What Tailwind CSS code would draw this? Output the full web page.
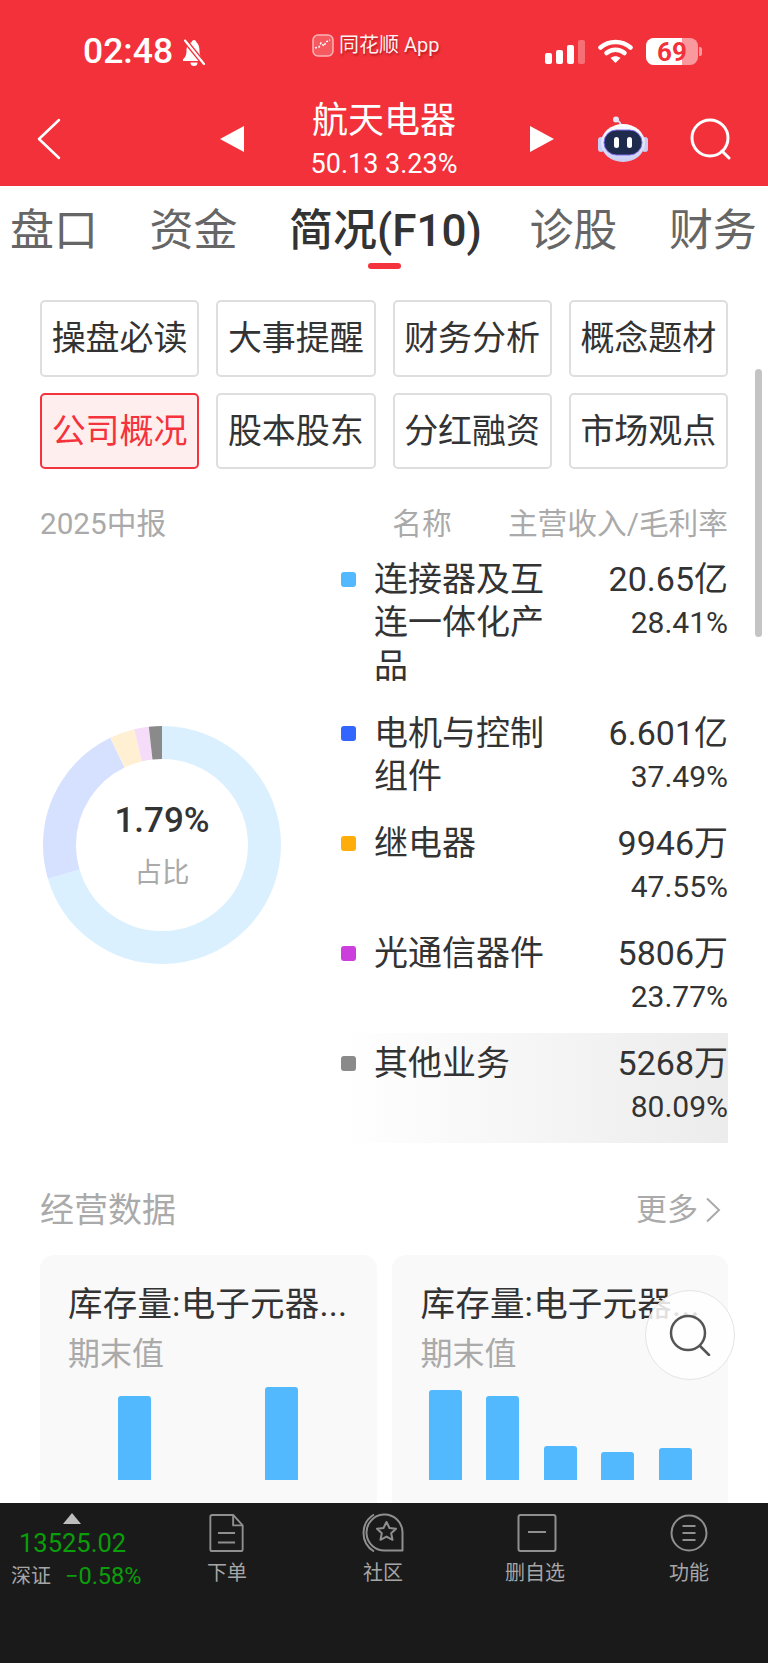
<!DOCTYPE html>
<html lang="zh-CN">
<head>
<meta charset="utf-8">
<script src="https://cdn.jsdelivr.net/npm/@tailwindcss/browser@4"></script>
</head>
<body class="m-0 bg-white font-['Roboto','Noto_Sans_CJK_SC',sans-serif]">
<div class="relative flex h-[1663px] w-[768px] flex-col overflow-hidden bg-white text-[#333]">

  <!-- red header -->
  <header class="h-[186px] shrink-0 bg-[#f2313a] text-white">
    <div class="flex h-[92px] items-start">
      <div class="mt-[30px] flex h-[44px] w-[290px] items-center pl-[83px]">
        <span class="text-[35.500px] leading-none font-medium">02:48</span>
        <svg class="ml-[8px] h-[27px] w-[26px]" viewBox="0 0 26 27" fill="white">
          <path d="M13 1c-1.400 0-2.300 1-2.400 2.300C6.700 4.500 5.500 8 5.500 12c0 3.800-1 6.300-3.500 8.300V22h20v-1.700c-2.500-2-3.500-4.500-3.500-8.300 0-4-1.200-7.500-3.100-8.700C15.300 2 14.400 1 13 1z"/>
          <path d="M9.500 23.500h7a3.500 3.500 0 0 1-7 0z"/>
          <path d="M4 1.500 L23 25" stroke="#f2313a" stroke-width="5"/>
          <path d="M4 1.500 L23 25" stroke="white" stroke-width="2.200" stroke-linecap="round"/>
        </svg>
      </div>
      <div class="mt-[33px] flex h-[24px] w-[255px] items-center pl-[22px]">
        <svg class="h-[23px] w-[22px]" viewBox="0 0 22 23">
          <rect x="1" y="1" width="20" height="21" rx="5" fill="#f65a61" stroke="#fbb4b7" stroke-width="1.500"/>
          <path d="M3 14l4-1 2-4 3 3 2-4 4-2" fill="none" stroke="white" stroke-width="1.500" stroke-dasharray="2 1.500"/>
        </svg>
        <span class="ml-[5px] text-[20px] leading-none text-white/95 [text-shadow:1px_2px_2px_rgba(120,0,0,0.45)]">同花顺 App</span>
      </div>
      <div class="mt-[38px] flex h-[27px] flex-1 items-center">
        <div class="flex h-[24px] items-end gap-[4px]">
          <span class="h-[11px] w-[7px] rounded-[2px] bg-white"></span>
          <span class="h-[14px] w-[7px] rounded-[2px] bg-white"></span>
          <span class="h-[19px] w-[7px] rounded-[2px] bg-white"></span>
          <span class="h-[24px] w-[7px] rounded-[2px] bg-white/30"></span>
        </div>
        <svg class="ml-[13px] h-[25px] w-[35px]" viewBox="0 0 35 25" fill="none" stroke="white" stroke-width="4.500" stroke-linecap="round">
          <path d="M2.500 8.500C11 1 24 1 32.500 8.500"/>
          <path d="M8.500 14c5-4.500 13-4.500 18 0"/>
          <path d="M17.500 24l-5-5c3-2.500 7-2.500 10 0z" fill="white" stroke="none"/>
        </svg>
        <div class="relative ml-[13px] h-[27px] w-[52px] overflow-hidden rounded-[8px] bg-white/50">
          <div class="h-full w-[36px] bg-white"></div>
          <span class="absolute inset-0 flex items-center justify-center text-[26px] leading-none font-bold text-[#f2313a]">69</span>
        </div>
        <span class="ml-[1px] h-[9px] w-[3px] rounded-r-[2px] bg-white/50"></span>
      </div>
    </div>
    <div class="flex h-[94px] items-center">
      <svg class="ml-[37px] h-[42px] w-[24px]" viewBox="0 0 24 42" fill="none" stroke="white" stroke-width="2.500" stroke-linecap="round" stroke-linejoin="round"><path d="M22 2 L2 21 L22 40"/></svg>
      <svg class="ml-[159px] h-[26px] w-[24px]" viewBox="0 0 24 26" fill="white"><path d="M24 0V26L0 13z"/></svg>
      <div class="ml-[68px] flex w-[144px] flex-col items-center">
        <span class="h-[50px] text-[36px] leading-[50px] whitespace-nowrap">航天电器</span>
        <span class="h-[36px] text-[27px] leading-[36px] whitespace-nowrap">50.13 3.23%</span>
      </div>
      <svg class="ml-[74px] h-[26px] w-[24px]" viewBox="0 0 24 26" fill="white"><path d="M0 0V26L24 13z"/></svg>
      <svg class="ml-[44px] h-[46px] w-[50px]" viewBox="0 0 50 46">
        <defs>
          <linearGradient id="rb" x1="0" y1="0" x2="0" y2="1"><stop offset="0" stop-color="#ffffff"/><stop offset="1" stop-color="#c9cdf3"/></linearGradient>
        </defs>
        <path d="M18 5 C 20 4 22 6 23 9" fill="none" stroke="#d9d9f5" stroke-width="1.800"/>
        <circle cx="18" cy="3.500" r="3" fill="#e6e6fa"/>
        <rect x="0" y="21" width="6" height="15" rx="3" fill="#c9cdf3"/>
        <rect x="44" y="21" width="6" height="15" rx="3" fill="#c9cdf3"/>
        <ellipse cx="25" cy="27" rx="22" ry="19" fill="url(#rb)"/>
        <rect x="6" y="14" width="38" height="25" rx="12.500" fill="#1f2b4d" stroke="#7f6df0" stroke-width="1"/>
        <rect x="16" y="21" width="5" height="11" rx="2.500" fill="white"/>
        <rect x="29" y="21" width="5" height="11" rx="2.500" fill="white"/>
      </svg>
      <svg class="ml-[42px] h-[42px] w-[42px]" viewBox="0 0 42 42" fill="none" stroke="white" stroke-width="3" stroke-linecap="round"><circle cx="20" cy="20" r="18"/><path d="M32 33l7 7"/></svg>
    </div>
  </header>

  <main class="relative min-h-0 flex-1 overflow-hidden">
    <!-- tabs -->
    <nav class="flex h-[88px] items-start gap-[51.500px] pt-[20px] pl-[10px] text-[44px] leading-[50px] whitespace-nowrap text-[#666]">
      <span>盘口</span><span>资金</span>
      <span class="relative -mr-[4px] font-medium text-[#333]">简况(F10)
        <i class="absolute top-[57px] left-[79px] h-[6px] w-[33px] rounded-[3px] bg-[#f4333c]"></i>
      </span>
      <span>诊股</span><span>财务</span>
    </nav>

    <!-- quick links -->
    <div class="mt-[26px] grid grid-cols-4 gap-x-[17px] gap-y-[16px] px-[40px] text-[34px] text-[#333]">
      <a class="flex h-[77px] items-center justify-center rounded-[5px] border-2 border-[#dedede]">操盘必读</a>
      <a class="flex h-[77px] items-center justify-center rounded-[5px] border-2 border-[#dedede]">大事提醒</a>
      <a class="flex h-[77px] items-center justify-center rounded-[5px] border-2 border-[#dedede]">财务分析</a>
      <a class="flex h-[77px] items-center justify-center rounded-[5px] border-2 border-[#dedede]">概念题材</a>
      <a class="flex h-[76px] items-center justify-center rounded-[5px] border-2 border-[#f4333c] bg-[#feeeee] text-[#f4333c]">公司概况</a>
      <a class="flex h-[76px] items-center justify-center rounded-[5px] border-2 border-[#dedede]">股本股东</a>
      <a class="flex h-[76px] items-center justify-center rounded-[5px] border-2 border-[#dedede]">分红融资</a>
      <a class="flex h-[76px] items-center justify-center rounded-[5px] border-2 border-[#dedede]">市场观点</a>
    </div>

    <!-- composition -->
    <section class="relative mt-[33px] h-[642px]">
      <div class="flex h-[44px] items-center px-[40px] text-[29.700px] leading-[44px] text-[#aaa]">
        <span class="w-[353px]">2025中报</span>
        <span class="w-[116px]">名称</span>
        <span class="flex-1 text-right whitespace-nowrap">主营收入/毛利率</span>
      </div>

      <div class="absolute top-[224px] left-[43px] h-[238px] w-[238px]">
        <svg class="h-full w-full -rotate-90" viewBox="0 0 238 238" fill="none" stroke-width="33">
          <circle cx="119" cy="119" r="102.500" stroke="#dbf0ff" pathLength="100" stroke-dasharray="70.4 100"/>
          <circle cx="119" cy="119" r="102.500" stroke="#d6e0ff" pathLength="100" stroke-dasharray="22.44 100" stroke-dashoffset="-70.4"/>
          <circle cx="119" cy="119" r="102.500" stroke="#fff0d4" pathLength="100" stroke-dasharray="3.39 100" stroke-dashoffset="-92.84"/>
          <circle cx="119" cy="119" r="102.500" stroke="#f5dcf8" pathLength="100" stroke-dasharray="1.98 100" stroke-dashoffset="-96.23"/>
          <circle cx="119" cy="119" r="102.500" stroke="#8a8a8a" pathLength="100" stroke-dasharray="1.79 100" stroke-dashoffset="-98.21"/>
        </svg>
        <div class="absolute inset-0 flex flex-col items-center pt-[70px]">
          <span class="h-[50px] text-[35px] leading-[50px] font-medium text-[#333]">1.79%</span>
          <span class="mt-[7px] text-[27.500px] leading-[40px] text-[#aaa]">占比</span>
        </div>
      </div>

      <div class="mt-[3px] ml-[341px] flex w-[387px] flex-col">
        <div class="flex h-[154px] pt-[9px]">
          <span class="mt-[14px] h-[15px] w-[15px] shrink-0 rounded-[3px] bg-[#52b9ff]"></span>
          <div class="ml-[18px] w-[172px] text-[34px] leading-[43.300px]">连接器及互连一体化产品</div>
          <div class="flex-1 text-right"><div class="text-[34px] leading-[43.300px]">20.65亿</div><div class="text-[30px] leading-[43.300px]">28.41%</div></div>
        </div>
        <div class="flex h-[110px] pt-[9px]">
          <span class="mt-[14px] h-[15px] w-[15px] shrink-0 rounded-[3px] bg-[#3366ff]"></span>
          <div class="ml-[18px] w-[172px] text-[34px] leading-[43.300px]">电机与控制组件</div>
          <div class="flex-1 text-right"><div class="text-[34px] leading-[43.300px]">6.601亿</div><div class="text-[30px] leading-[43.300px]">37.49%</div></div>
        </div>
        <div class="flex h-[110px] pt-[9px]">
          <span class="mt-[14px] h-[15px] w-[15px] shrink-0 rounded-[3px] bg-[#ffad0a]"></span>
          <div class="ml-[18px] w-[172px] text-[34px] leading-[43.300px]">继电器</div>
          <div class="flex-1 text-right"><div class="text-[34px] leading-[43.300px]">9946万</div><div class="text-[30px] leading-[43.300px]">47.55%</div></div>
        </div>
        <div class="flex h-[110px] pt-[9px]">
          <span class="mt-[14px] h-[15px] w-[15px] shrink-0 rounded-[3px] bg-[#cc3fdd]"></span>
          <div class="ml-[18px] w-[172px] text-[34px] leading-[43.300px]">光通信器件</div>
          <div class="flex-1 text-right"><div class="text-[34px] leading-[43.300px]">5806万</div><div class="text-[30px] leading-[43.300px]">23.77%</div></div>
        </div>
        <div class="flex h-[110px] bg-gradient-to-r from-white to-[#ececec] pt-[9px]">
          <span class="mt-[14px] h-[15px] w-[15px] shrink-0 rounded-[3px] bg-[#8a8a8a]"></span>
          <div class="ml-[18px] w-[172px] text-[34px] leading-[43.300px]">其他业务</div>
          <div class="flex-1 text-right"><div class="text-[34px] leading-[43.300px]">5268万</div><div class="text-[30px] leading-[43.300px]">80.09%</div></div>
        </div>
      </div>
    </section>

    <!-- operating data -->
    <section class="mt-[42px] px-[40px]">
      <div class="flex h-[48px] items-center justify-between text-[#aaa]">
        <span class="text-[34px] leading-[48px]">经营数据</span>
        <span class="flex items-center text-[31px] leading-[48px]">更多
          <svg class="mr-[7px] ml-[7px] h-[26px] w-[16px]" viewBox="0 0 16 26" fill="none" stroke="#aaa" stroke-width="2"><path d="M2 1.500 L14 13 L2 24.500"/></svg>
        </span>
      </div>
      <div class="mt-[21px] grid grid-cols-2 gap-x-[15px]">
        <div class="h-[280px] rounded-[14px] bg-[#f9f9f9] px-[28px] pt-[25px]">
          <div class="h-[48px] text-[34.500px] leading-[48px] tracking-[0.2px] whitespace-nowrap">库存量:电子元器...</div>
          <div class="h-[48px] text-[32px] leading-[52px] text-[#aaa]">期末值</div>
          <div class="relative mt-[13px] h-[91px]">
            <span class="absolute bottom-0 left-[50px] h-[84px] w-[33px] rounded-t-[3px] bg-[#52b9ff]"></span>
            <span class="absolute bottom-0 left-[197px] h-[93px] w-[33px] rounded-t-[3px] bg-[#52b9ff]"></span>
          </div>
        </div>
        <div class="h-[280px] rounded-[14px] bg-[#f9f9f9] px-[29px] pt-[25px]">
          <div class="h-[48px] text-[34.500px] leading-[48px] tracking-[0.2px] whitespace-nowrap">库存量:电子元器...</div>
          <div class="h-[48px] text-[32px] leading-[52px] text-[#aaa]">期末值</div>
          <div class="mt-[13px] ml-[8px] flex h-[91px] items-end gap-[24.500px]">
            <span class="h-[90px] w-[33px] rounded-t-[3px] bg-[#52b9ff]"></span>
            <span class="h-[84px] w-[33px] rounded-t-[3px] bg-[#52b9ff]"></span>
            <span class="h-[34px] w-[33px] rounded-t-[3px] bg-[#52b9ff]"></span>
            <span class="h-[28px] w-[33px] rounded-t-[3px] bg-[#52b9ff]"></span>
            <span class="h-[32px] w-[33px] rounded-t-[3px] bg-[#52b9ff]"></span>
          </div>
        </div>
      </div>
    </section>

    <!-- scrollbar + floating search -->
    <span class="absolute top-[183px] left-[755px] h-[268px] w-[7px] rounded-full bg-[#c4c4c4]"></span>
    <div class="absolute top-[1104px] left-[645px] flex h-[90px] w-[90px] items-center justify-center rounded-full border border-[#e4e4e4] bg-white/85">
      <svg class="h-[42px] w-[42px]" viewBox="0 0 42 42" fill="none" stroke="#555" stroke-width="2.500" stroke-linecap="round"><circle cx="19" cy="19" r="17"/><path d="M31 32l9 9"/></svg>
    </div>
  </main>

  <!-- bottom bar -->
  <footer class="flex h-[160px] shrink-0 items-start bg-[#1a1a1a] pt-[10px] text-[#a6a6a6]">
    <div class="relative w-[150px]">
      <svg class="ml-[63px] block h-[11px] w-[18px]" viewBox="0 0 18 11" fill="#bdbdbd"><path d="M9 0L18 11H0z"/></svg>
      <div class="mt-[4px] pl-[19px] text-[25.500px] leading-[30px] text-[#0a9e0a]">13525.02</div>
      <div class="mt-[2px] flex items-center whitespace-nowrap pl-[11px]">
        <span class="text-[20px] leading-[32px]">深证</span>
        <span class="ml-[14px] text-[23.500px] leading-[32px] text-[#0a9e0a]">−0.58%</span>
      </div>
    </div>
    <div class="flex w-[154px] flex-col items-center pr-[2px]">
      <svg class="mt-[1px] h-[38px] w-[35px]" viewBox="0 0 36 40" fill="none" stroke="#8f8f8f" stroke-width="2" stroke-linejoin="round"><path d="M3 1H25L35 12V37a2 2 0 0 1-2 2H3a2 2 0 0 1-2-2V3a2 2 0 0 1 2-2z"/><path d="M25 1V12H35"/><path d="M9 20H27M9 30H27"/></svg>
      <span class="mt-[2px] pl-[2px] text-[20px] leading-[38px]">下单</span>
    </div>
    <div class="flex w-[154px] flex-col items-center pl-[4px]">
      <svg class="h-[40px] w-[42px]" viewBox="0 0 42 40" fill="none" stroke="#8f8f8f" stroke-width="2" stroke-linejoin="round"><path d="M40.500 37.500H24A18 18 0 1 1 40.500 19z"/><path d="M12 1.500C-2 10-2 30 12 38.500"/><path d="M24.500 9l3 6 6.500.8-4.800 4.500 1.300 6.500-6-3.200-6 3.200 1.300-6.500-4.800-4.500 6.500-.8z"/></svg>
      <span class="mt-[1px] text-[20px] leading-[38px]">社区</span>
    </div>
    <div class="flex w-[154px] flex-col items-center">
      <svg class="ml-[4px] h-[40px] w-[40px]" viewBox="0 0 40 40" fill="none" stroke="#8f8f8f" stroke-width="2"><rect x="1.500" y="2" width="37" height="36" rx="2"/><path d="M11 19H29"/></svg>
      <span class="mt-[1px] text-[20px] leading-[38px]">删自选</span>
    </div>
    <div class="flex w-[154px] flex-col items-center">
      <svg class="h-[40px] w-[38px]" viewBox="0 0 38 40" fill="none" stroke="#8f8f8f" stroke-width="2"><circle cx="19" cy="20" r="17.500"/><path d="M12.500 13H25.500M12.500 20H25.500M12.500 27H25.500"/></svg>
      <span class="mt-[1px] text-[20px] leading-[38px]">功能</span>
    </div>
  </footer>
</div>
</body>
</html>
